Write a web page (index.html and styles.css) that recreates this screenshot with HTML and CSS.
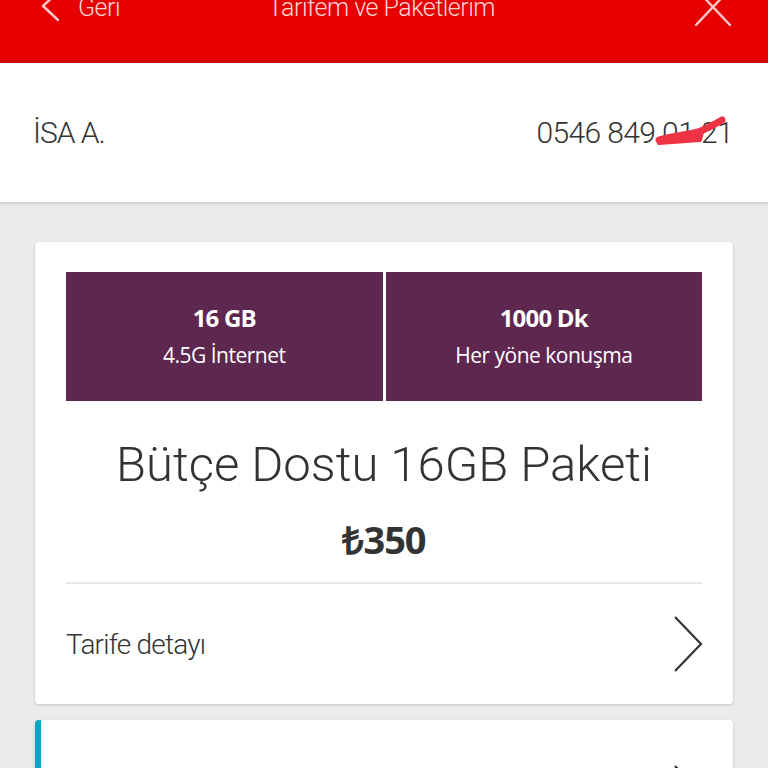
FILE: index.html
```html
<!DOCTYPE html>
<html lang="tr">
<head>
<meta charset="utf-8">
<link rel="stylesheet" href="styles.css">
</head>
<body>
<header class="topbar">
  <div class="topbar-row">
    <div class="back">
      <svg class="back-icon" width="22" height="30" viewBox="0 0 22 30"><path d="M18 0 L3 14 L18 28" fill="none" stroke="#ffc9c9" stroke-width="2.4" stroke-linecap="round" stroke-linejoin="round"/></svg>
      <span class="back-text">Geri</span>
    </div>
    <div class="title">Tarifem ve Paketlerim</div>
    <svg class="close-icon" width="40" height="40" viewBox="0 0 40 40"><path d="M3 2 L37 38 M37 2 L3 38" fill="none" stroke="#ffc9c9" stroke-width="2.4" stroke-linecap="round"/></svg>
  </div>
</header>

<section class="userbar">
  <span class="user-name">İSA A.</span>
  <span class="user-phone">0546 849 <span class="masked">01<svg class="scribble" width="76" height="34" viewBox="0 0 76 34"><path d="M7 25 C20 21 34 20 46 17 C55 14 63 9 70 5" fill="none" stroke="#ee3344" stroke-width="7" stroke-linecap="round"/><path d="M7 28 L48 25 L50 17 L30 20 Z" fill="#ee3344" stroke="#ee3344" stroke-width="4" stroke-linejoin="round"/></svg></span> 21</span>
</section>

<main class="content">
  <article class="card">
    <div class="tiles">
      <div class="tile">
        <div class="tile-value">16 GB</div>
        <div class="tile-label">4.5G İnternet</div>
      </div>
      <div class="tile">
        <div class="tile-value">1000 Dk</div>
        <div class="tile-label">Her yöne konuşma</div>
      </div>
    </div>
    <h1 class="plan-name">Bütçe Dostu 16GB Paketi</h1>
    <div class="plan-price">₺350</div>
    <div class="divider"></div>
    <div class="link-row">
      <span class="link-text">Tarife detayı</span>
      <svg class="chevron" width="32" height="58" viewBox="0 0 32 58"><path d="M3 2 L29 29 L3 56" fill="none" stroke="#333" stroke-width="2.2" stroke-linejoin="miter"/></svg>
    </div>
  </article>

  <article class="card card-accent">
    <div class="link-row link-row-2">
      <span class="link-text faded">Ek Paketler</span>
      <svg class="chevron" width="32" height="58" viewBox="0 0 32 58"><path d="M3 2 L29 29 L3 56" fill="none" stroke="#333" stroke-width="2.2"/></svg>
    </div>
  </article>
</main>
</body>
</html>
```

FILE: styles.css
```css
* { box-sizing: border-box; }
html, body { margin: 0; padding: 0; }
body {
  width: 768px;
  height: 768px;
  overflow: hidden;
  background: #ebebeb;
  font-family: Roboto, "Liberation Sans", sans-serif;
  color: #333;
}

.topbar {
  height: 63px;
  background: #e60000;
  border-bottom: 2px solid #c40808;
  padding: 0 35px 0 40px;
  overflow: hidden;
}
.topbar-row {
  display: flex;
  align-items: center;
  justify-content: space-between;
  margin-top: -13px;
  height: 40px;
}
.back {
  display: flex;
  align-items: center;
  gap: 16px;
  width: 200px;
}
.back-text, .title {
  font-family: Roboto, sans-serif;
  font-weight: 300;
  font-size: 25px;
  color: #ffd6d6;
  letter-spacing: -0.5px;
}
.title { flex: 1; text-align: center; margin-right: 170px; }

.userbar {
  height: 139px;
  background: #fff;
  display: flex;
  align-items: center;
  justify-content: space-between;
  padding: 0 35px 0 33px;
  box-shadow: 0 2px 3px rgba(0,0,0,0.12);
  font-weight: 300;
  font-size: 30px;
  color: #333;
  letter-spacing: -1px;
}
.user-phone { position: relative; letter-spacing: -0.6px; }
.masked { position: relative; }
.scribble {
  position: absolute;
  left: -10px;
  top: 0px;
}

.content {
  padding: 40px 35px 0 35px;
  display: flex;
  flex-direction: column;
  gap: 16px;
}
.card {
  background: #fff;
  border-radius: 4px;
  box-shadow: 0 1px 3px rgba(0,0,0,0.18);
  padding: 30px 31px 0 31px;
}
.tiles {
  display: grid;
  grid-template-columns: 1fr 1fr;
  gap: 3px;
}
.tile {
  background: #5e2750;
  height: 129px;
  display: flex;
  flex-direction: column;
  align-items: center;
  justify-content: center;
  color: #fff;
  font-family: "Open Sans", sans-serif;
  padding-top: 2px;
}
.tile-value {
  font-weight: 700;
  font-size: 24px;
  letter-spacing: -0.8px;
  line-height: 34px;
}
.tile-label {
  font-size: 21px;
  letter-spacing: -0.5px;
  line-height: 40px;
}
.plan-name {
  margin: 34px 0 0;
  text-align: center;
  font-weight: 300;
  font-size: 49px;
  line-height: 60px;
  color: #333;
  letter-spacing: 0;
}
.plan-price {
  text-align: center;
  font-family: "Open Sans", sans-serif;
  font-weight: 700;
  font-size: 38px;
  letter-spacing: -1px;
  color: #333;
  margin-top: 20px;
  line-height: 48px;
}
.divider {
  height: 2px;
  background: #e8e8e8;
  margin-top: 19px;
}
.link-row {
  display: flex;
  align-items: center;
  justify-content: space-between;
  height: 120px;
}
.link-text {
  font-weight: 300;
  font-size: 28px;
  letter-spacing: -0.8px;
  color: #333;
}
.chevron { margin-right: -2px; }

.card-accent {
  border-left: 6px solid #0fa4c3;
  padding-left: 25px;
  padding-top: 0;
}
.link-row-2 { height: 120px; padding-top: 26px; }
.faded { color: #bbb; }
```
